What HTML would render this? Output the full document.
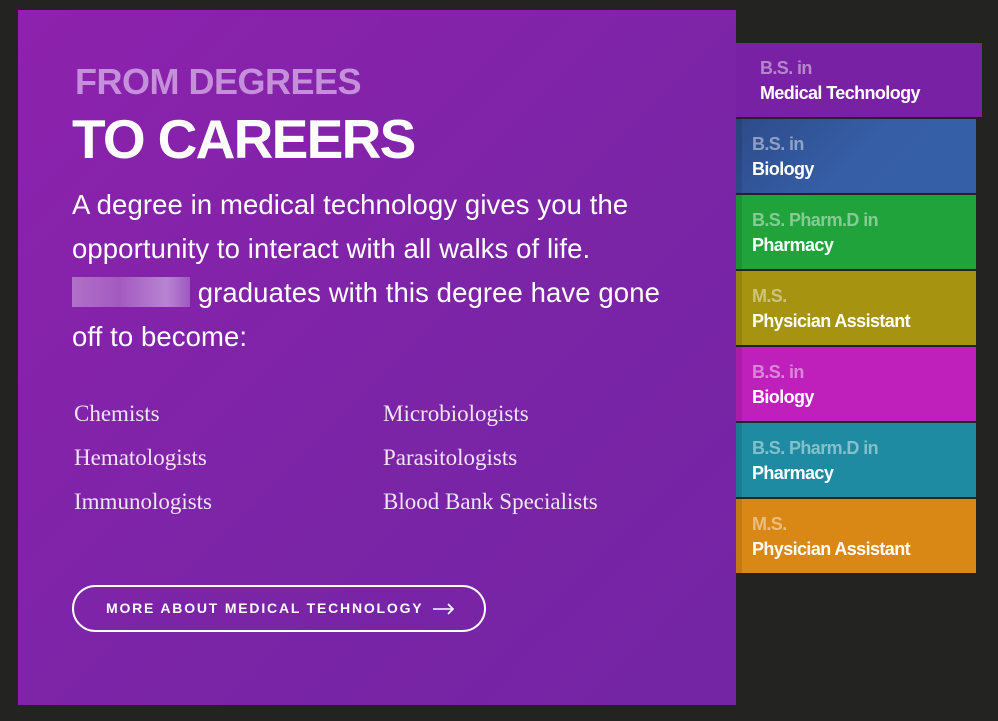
<!DOCTYPE html><html><head><style>
body{margin:0;width:998px;height:721px;background:#232321;position:relative;overflow:hidden;font-family:"Liberation Sans",sans-serif}
.panel{position:absolute;left:18px;top:10px;width:718px;height:695px;background:linear-gradient(135deg,#8d22ad 0%,#7a24a6 60%,#7325a4 100%)}
.h1{position:absolute;left:75px;top:61px;font-size:36px;font-weight:bold;color:#c68fdc;letter-spacing:-0.5px;white-space:nowrap}
.h2{position:absolute;left:72px;top:107px;font-size:55px;font-weight:bold;color:#fff;letter-spacing:-1.7px;white-space:nowrap}
.p{position:absolute;left:72px;top:183px;font-size:27.5px;line-height:44px;color:#fff;letter-spacing:0.1px;white-space:nowrap}
.blur{display:inline-block;width:118px;height:30px;vertical-align:-5px;background:linear-gradient(90deg,#b070c8,#a35ac0 40%,#b884d2 80%,#a058c0)}
.li{position:absolute;font-family:"Liberation Serif",serif;font-size:23px;color:#f0e4f6;white-space:nowrap}
.btn{position:absolute;left:72px;top:585px;width:410px;height:43px;border:2px solid #fff;border-radius:24px;color:#fff;font-size:14px;font-weight:bold;letter-spacing:1.8px;line-height:43px;text-indent:32px;white-space:nowrap}
.tab{position:absolute;left:736px;width:240px;height:74px;box-shadow:inset 6px 0 0 rgba(0,0,0,0.1)}
.tab .a{position:absolute;left:16px;top:15px;font-size:18px;font-weight:bold;color:rgba(255,255,255,0.45);letter-spacing:-0.6px;white-space:nowrap}
.tab .b{position:absolute;left:16px;top:40px;font-size:18px;font-weight:bold;color:#fff;letter-spacing:-0.6px;white-space:nowrap}
</style></head><body>
<div class="panel"></div>
<div class="h1">FROM DEGREES</div>
<div class="h2">TO CAREERS</div>
<div class="p">A degree in medical technology gives you the<br>opportunity to interact with all walks of life.<br><span class="blur"></span> graduates with this degree have gone<br>off to become:</div>
<div class="li" style="left:74px;top:401px">Chemists</div>
<div class="li" style="left:74px;top:445px">Hematologists</div>
<div class="li" style="left:74px;top:489px">Immunologists</div>
<div class="li" style="left:383px;top:401px">Microbiologists</div>
<div class="li" style="left:383px;top:445px">Parasitologists</div>
<div class="li" style="left:383px;top:489px">Blood Bank Specialists</div>
<div class="btn">MORE ABOUT MEDICAL TECHNOLOGY<svg width="22" height="12" viewBox="0 0 22 12" style="position:absolute;left:359px;top:16px"><path d="M0 6H20M15 1L20 6L15 11" stroke="#fff" stroke-width="1.6" fill="none"/></svg></div>
<div class="tab" style="top:43px;width:246px;background:#7921a4;box-shadow:none"><div class="a" style="left:24px">B.S. in</div><div class="b" style="left:24px">Medical Technology</div></div>
<div class="tab" style="top:119px;background:linear-gradient(135deg,#2e4b8a,#355ea6 50%,#3560a8)"><div class="a">B.S. in</div><div class="b">Biology</div></div>
<div class="tab" style="top:195px;background:#21a33c"><div class="a">B.S. Pharm.D in</div><div class="b">Pharmacy</div></div>
<div class="tab" style="top:271px;background:#a69310"><div class="a">M.S.</div><div class="b">Physician Assistant</div></div>
<div class="tab" style="top:347px;background:#bf20bb"><div class="a">B.S. in</div><div class="b">Biology</div></div>
<div class="tab" style="top:423px;background:#1e8ba2"><div class="a">B.S. Pharm.D in</div><div class="b">Pharmacy</div></div>
<div class="tab" style="top:499px;background:#d98815"><div class="a">M.S.</div><div class="b">Physician Assistant</div></div>
</body></html>
